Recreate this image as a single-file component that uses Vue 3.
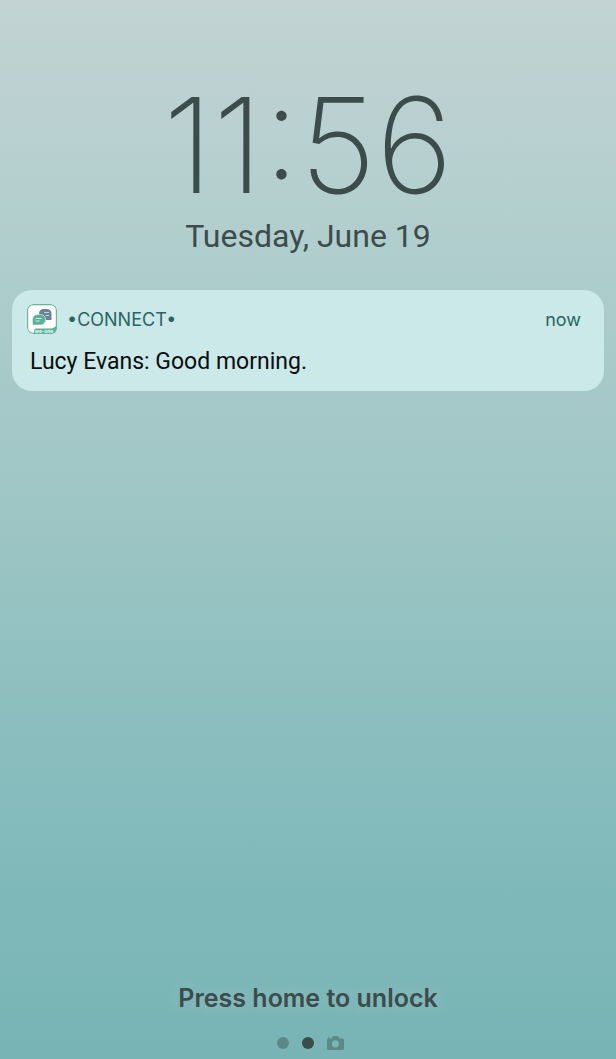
<script setup>
const time = "11:56";
const date = "Tuesday, June 19";

const notification = {
  app: "•CONNECT•",
  when: "now",
  message: "Lucy Evans: Good morning.",
};
</script>

<template>
  <main class="lock-screen">
    <header class="clock">
      <time class="time">{{ time }}</time>
      <p class="date">{{ date }}</p>
    </header>

    <article class="notification">
      <div class="notification-header">
        <svg class="app-icon" viewBox="0 0 30 30" aria-hidden="true">
          <defs>
            <clipPath id="icon-shape">
              <rect width="30" height="30" rx="6" />
            </clipPath>
          </defs>
          <g clip-path="url(#icon-shape)">
            <rect width="30" height="30" fill="#fff" />
            <path d="M7 30V27q0-2.500 2.500-2.500H23q5.500 0 7-5V30z" fill="#58b394" />
            <rect x="0.600" y="0.600" width="28.800" height="28.800" rx="5.500" fill="none" stroke="#68b59c" stroke-width="1.200" />
          </g>
          <path d="M16.500 5H20a4.500 4.500 0 0 1 4.500 4.500V16H16.500a4.500 4.500 0 0 1-4.500-4.500V9.500A4.500 4.500 0 0 1 16.500 5z" fill="#6d819b" />
          <path d="M17 8.500h5M18.500 11.500h3.500" stroke="#c8d0dc" stroke-width="1" />
          <path d="M10.500 10.500H13.500a5 5 0 0 1 0 10.500H5.500V15.500a5 5 0 0 1 5-5z" fill="#58b394" stroke="#fff" stroke-width="0.500" />
          <path d="M8.500 14.500h6M8.500 17h4" stroke="#d4eee4" stroke-width="1" />
          <text x="17" y="28.500" text-anchor="middle" class="icon-name">we-one</text>
        </svg>
        <span class="app-name">{{ notification.app }}</span>
        <time class="when">{{ notification.when }}</time>
      </div>
      <p class="message">{{ notification.message }}</p>
    </article>

    <footer class="footer">
      <p class="hint">Press home to unlock</p>
      <div class="pages">
        <span class="dot"></span>
        <span class="dot active"></span>
        <svg class="camera" viewBox="0 0 17 14" aria-hidden="true">
          <path
            fill-rule="evenodd"
            d="M1.500 2.500H4.500L5.500 1Q6 0 7 0H10Q11 0 11.500 1L12.500 2.500H15.500Q17 2.500 17 4V12.500Q17 14 15.500 14H1.500Q0 14 0 12.500V4Q0 2.500 1.500 2.500zM8.500 4.200a3.600 3.600 0 1 0 0 7.200a3.600 3.600 0 1 0 0-7.200z"
          />
          <circle cx="1.800" cy="1.600" r="0.800" />
        </svg>
      </div>
    </footer>
  </main>
</template>

<style>
body {
  margin: 0;
}
</style>

<style scoped>
.lock-screen {
  box-sizing: border-box;
  display: flex;
  flex-direction: column;
  min-height: 100vh;
  padding: 79px 12px 9px;
  background: linear-gradient(#c3d3d3 0%, #b0cecd 23%, #9cc5c4 50%, #84bbbc 77%, #78b4b5 100%);
  color: #3b4c4b;
  font-family: Inter, "Liberation Sans", sans-serif;
}

p {
  margin: 0;
}

.clock {
  display: flex;
  flex-direction: column;
  align-items: center;
}

.time {
  font-size: 132px;
  font-weight: 200;
  line-height: 132px;
}

.date {
  margin-top: 5px;
  font-family: Roboto, "Liberation Sans", sans-serif;
  font-size: 32px;
  line-height: 40px;
}

.notification {
  margin-top: 34px;
  padding: 14px 23px 15px 15px;
  border-radius: 20px;
  background: #cae9e8;
}

.notification-header {
  display: flex;
  color: #2a6462;
  font-size: 18px;
  line-height: 32px;
}

.app-icon {
  width: 30px;
  height: 30px;
}

.icon-name {
  fill: #fff;
  font-size: 5px;
  font-weight: 600;
}

.app-name {
  margin-left: 10px;
}

.when {
  margin-left: auto;
}

.message {
  margin: 12px 0 0 3px;
  color: #0a0d0d;
  font-family: Roboto, "Liberation Sans", sans-serif;
  font-size: 23px;
  line-height: 28px;
}

.footer {
  display: flex;
  flex-direction: column;
  align-items: center;
  margin-top: auto;
}

.hint {
  font-size: 25px;
  font-weight: 600;
  line-height: 32px;
  text-shadow: 0 0 16px rgba(255, 255, 255, 0.2);
}

.pages {
  display: flex;
  align-items: center;
  gap: 13px;
  margin: 22px 0 0 4px;
}

.dot {
  width: 12px;
  height: 12px;
  border-radius: 50%;
  background: #5c8988;
}

.dot.active {
  background: #3b4c4b;
}

.camera {
  width: 17px;
  height: 14px;
  fill: #5c8988;
}
</style>
